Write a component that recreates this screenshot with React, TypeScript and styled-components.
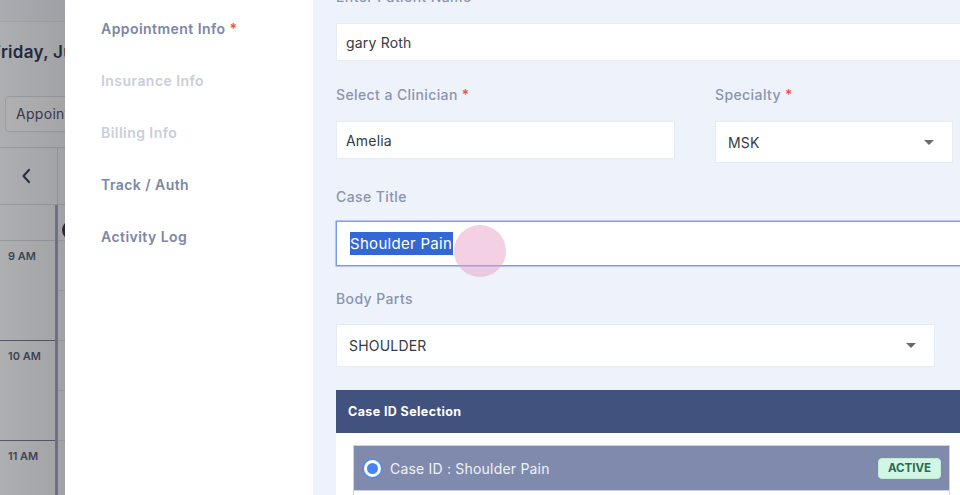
import React from "react";
import styled, { createGlobalStyle } from "styled-components";

const Global = createGlobalStyle`
  html, body { margin: 0; padding: 0; }
  body { font-family: "Inter", "Noto Sans", sans-serif; background: #fff; }
  * { box-sizing: border-box; }
`;

const Page = styled.div`
  display: flex;
  width: 960px;
  height: 495px;
  overflow: hidden;
  position: relative;
`;

/* ---------- dimmed calendar behind modal ---------- */
const Backdrop = styled.div`
  position: relative;
  width: 65px;
  flex: none;
  overflow: hidden;
  background: #fafbfd;
  display: flex;
  flex-direction: column;
  & > * { flex-shrink: 0; }
`;
const TopBand = styled.div`
  height: 22px;
  background: #f3f6fd;
  border-bottom: 1px solid #e6e9f0;
`;
const DateTitle = styled.div`
  height: 58px;
  display: flex;
  align-items: center;
  margin-left: -9px;
  padding-top: 1px;
  white-space: nowrap;
  font-size: 17px;
  font-weight: 600;
  letter-spacing: 0.3px;
  color: #1e2a4a;
`;
const ToolRow = styled.div`
  height: 68px;
  display: flex;
  align-items: center;
  padding-left: 5px;
  border-bottom: 1px solid #d8dbe2;
`;
const ViewButton = styled.div`
  height: 36px;
  width: 90px;
  flex: none;
  border: 1px solid #dde0e8;
  border-radius: 4px;
  display: flex;
  align-items: center;
  padding-left: 10px;
  font-size: 14px;
  letter-spacing: 0.3px;
  color: #3a4462;
  background: #fff;
`;
const NavRow = styled.div`
  height: 57px;
  display: flex;
  border-bottom: 1px solid #d8dbe2;
`;
const NavCell = styled.div`
  width: 58px;
  flex: none;
  display: flex;
  align-items: center;
  justify-content: center;
  padding-right: 6px;
  border-right: 1px solid #d8dbe2;
  color: #2b3656;
`;
const Grid = styled.div`
  display: flex;
  flex: 1;
`;
const TimeCol = styled.div`
  width: 55px;
  flex: none;
  display: flex;
  flex-direction: column;
  padding-top: 35px;
`;
const HourCell = styled.div`
  height: 100px;
  flex: none;
  border-top: 1.5px solid #6d7284;
  font-size: 11px;
  font-weight: 600;
  color: #4c546e;
  padding: 8px 0 0 8px;
  &:first-child { border-top-color: #d8dbe2; padding-top: 8px; }
`;
const DayBar = styled.div`
  width: 3px;
  flex: none;
  background: #9aa2c4;
`;
const DayCol = styled.div`
  flex: 1;
  display: flex;
  flex-direction: column;
  padding-top: 15px;
`;
const Avatar = styled.div`
  width: 20px;
  height: 20px;
  flex: none;
  margin-left: 4px;
  border-radius: 50%;
  background: #2a2730;
`;
const SlotCell = styled.div`
  height: 50px;
  flex: none;
  border-top: 1px solid #e2e4ea;
`;
const Dim = styled.div`
  position: absolute;
  inset: 0;
  background: linear-gradient(to right, rgba(40, 40, 44, 0.36), rgba(40, 40, 44, 0.42));
`;

/* ---------- modal ---------- */
const Sidebar = styled.nav`
  width: 248px;
  flex: none;
  background: #ffffff;
  display: flex;
  flex-direction: column;
  padding: 2px 0 0 36px;
`;
const NavItem = styled.div<{ $tone: "strong" | "muted" }>`
  height: 52px;
  display: flex;
  align-items: center;
  font-size: 14px;
  font-weight: 600;
  letter-spacing: 0.45px;
  color: ${(p) => (p.$tone === "strong" ? "#7c86a8" : "#c9cedc")};
`;
const Req = styled.span`
  color: #ef4b4b;
  margin-left: 4px;
`;

const FormArea = styled.main`
  flex: 1;
  background: #eef3fb;
  overflow: hidden;
  position: relative;
`;
const FormScroll = styled.div`
  margin-top: -13px;
  padding-left: 23px;
  width: 700px;
  display: flex;
  flex-direction: column;
`;
const Field = styled.div<{ $w?: number; $mt?: number; $gap?: number }>`
  display: flex;
  flex-direction: column;
  gap: ${(p) => p.$gap ?? 16}px;
  margin-top: ${(p) => p.$mt ?? 0}px;
  width: ${(p) => (p.$w ? `${p.$w}px` : "auto")};
`;
const Row = styled.div<{ $mt: number }>`
  display: flex;
  gap: 40px;
  align-items: flex-start;
  margin-top: ${(p) => p.$mt}px;
`;
const Label = styled.label`
  height: 20px;
  line-height: 20px;
  font-size: 14px;
  font-weight: 500;
  letter-spacing: 0.4px;
  color: #8a93b0;
`;
const Input = styled.div<{ $h: number; $focus?: boolean; $pad?: number }>`
  height: ${(p) => p.$h}px;
  background: #fff;
  border: 1px solid ${(p) => (p.$focus ? "#7b9de8" : "#e7ebf2")};
  box-shadow: ${(p) => (p.$focus ? "0 0 0 0.5px #7b9de8" : "none")};
  display: flex;
  align-items: center;
  padding-left: ${(p) => p.$pad ?? 9}px;
  padding-right: 18px;
  font-size: 14px;
  letter-spacing: 0.2px;
  color: #363a45;
  justify-content: space-between;
`;
const Caret = styled.span`
  width: 0;
  height: 0;
  border-left: 5px solid transparent;
  border-right: 5px solid transparent;
  border-top: 5px solid #666a72;
`;
const Selection = styled.span`
  background: #3467d6;
  color: #fff;
  font-size: 15px;
  letter-spacing: 0.3px;
  line-height: 23px;
  padding-right: 1px;
`;
const Touch = styled.div`
  position: absolute;
  left: 141px;
  top: 225px;
  width: 52px;
  height: 52px;
  border-radius: 50%;
  background: rgba(229, 150, 196, 0.45);
`;

const Panel = styled.section`
  display: flex;
  flex-direction: column;
  width: 680px;
  margin-top: 23px;
`;
const PanelHead = styled.div`
  height: 43px;
  background: #41527e;
  color: #fff;
  font-size: 12.5px;
  font-weight: 700;
  letter-spacing: 0.4px;
  display: flex;
  align-items: center;
  padding-left: 12px;
`;
const PanelBody = styled.div`
  background: #fff;
  padding: 12px 0 0 17px;
  height: 80px;
`;
const CaseCard = styled.div`
  width: 597px;
  border: 1px solid #c9d0f3;
  display: flex;
  flex-direction: column;
`;
const CaseHead = styled.div`
  height: 45px;
  background: #7f8aad;
  display: flex;
  align-items: center;
  padding: 0 8px 0 10px;
  border-bottom: 1px solid #c9d0f3;
`;
const Radio = styled.span`
  width: 17px;
  height: 17px;
  border-radius: 50%;
  background: #4385f6;
  border: 3px solid #ffffff;
  box-shadow: 0 0 0 1.5px #4d8cf6;
  flex: none;
`;
const CaseText = styled.span`
  margin-left: 9px;
  font-size: 14px;
  letter-spacing: 0.2px;
  color: #f1f2f7;
  flex: 1;
`;
const Badge = styled.span`
  height: 21px;
  padding: 0 9px;
  border-radius: 4px;
  background: #d1f6e4;
  border: 1px solid #c0ecd6;
  color: #2b6a53;
  font-size: 11.5px;
  font-weight: 700;
  display: flex;
  align-items: center;
`;
const CaseBodyStrip = styled.div`
  height: 20px;
  background: #fff;
`;

export default function App() {
  return (
    <>
      <Global />
      <Page>
        <Backdrop>
          <TopBand />
          <DateTitle>Friday, June 14</DateTitle>
          <ToolRow>
            <ViewButton>Appointments</ViewButton>
          </ToolRow>
          <NavRow>
            <NavCell>
              <svg width="12" height="16" viewBox="0 0 12 16" fill="none">
                <path d="M9 2 L3.5 8 L9 14" stroke="#2b3656" strokeWidth="2.2" strokeLinecap="round" strokeLinejoin="round" />
              </svg>
            </NavCell>
          </NavRow>
          <Grid>
            <TimeCol>
              <HourCell>9 AM</HourCell>
              <HourCell>10 AM</HourCell>
              <HourCell>11 AM</HourCell>
            </TimeCol>
            <DayBar />
            <DayCol>
              <Avatar />
              <SlotCell />
              <SlotCell />
              <SlotCell />
              <SlotCell />
              <SlotCell />
            </DayCol>
          </Grid>
          <Dim />
        </Backdrop>

        <Sidebar>
          <NavItem $tone="strong">
            Appointment Info<Req>*</Req>
          </NavItem>
          <NavItem $tone="muted">Insurance Info</NavItem>
          <NavItem $tone="muted">Billing Info</NavItem>
          <NavItem $tone="strong">Track / Auth</NavItem>
          <NavItem $tone="strong">Activity Log</NavItem>
        </Sidebar>

        <FormArea>
          <FormScroll>
            <Field>
              <Label>Enter Patient Name</Label>
              <Input $h={38}>gary Roth</Input>
            </Field>
            <Row $mt={24}>
              <Field $w={339}>
                <Label>
                  Select a Clinician<Req>*</Req>
                </Label>
                <Input $h={38}>Amelia</Input>
              </Field>
              <Field $w={238}>
                <Label>
                  Specialty<Req>*</Req>
                </Label>
                <Input $h={42} $pad={12}>
                  MSK
                  <Caret />
                </Input>
              </Field>
            </Row>
            <Field $mt={24} $gap={14}>
              <Label>Case Title</Label>
              <Input $h={45} $focus $pad={13}>
                <Selection>Shoulder Pain</Selection>
              </Input>
            </Field>
            <Field $w={599} $mt={23} $gap={15}>
              <Label>Body Parts</Label>
              <Input $h={43} $pad={12}>
                SHOULDER
                <Caret />
              </Input>
            </Field>
            <Panel>
              <PanelHead>Case ID Selection</PanelHead>
              <PanelBody>
                <CaseCard>
                  <CaseHead>
                    <Radio />
                    <CaseText>Case ID : Shoulder Pain</CaseText>
                    <Badge>ACTIVE</Badge>
                  </CaseHead>
                  <CaseBodyStrip />
                </CaseCard>
              </PanelBody>
            </Panel>
          </FormScroll>
          <Touch />
        </FormArea>
      </Page>
    </>
  );
}
